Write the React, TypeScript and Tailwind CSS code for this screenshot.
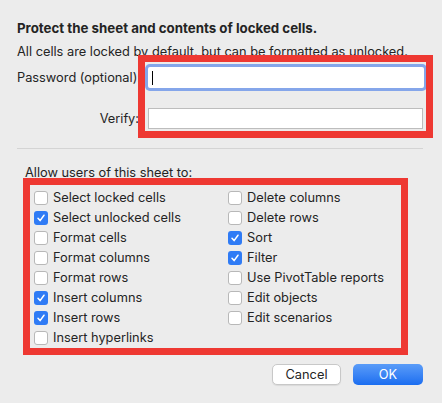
import React from "react";

const left: [string, boolean][] = [
  ["Select locked cells", false],
  ["Select unlocked cells", true],
  ["Format cells", false],
  ["Format columns", false],
  ["Format rows", false],
  ["Insert columns", true],
  ["Insert rows", true],
  ["Insert hyperlinks", false],
];
const right: [string, boolean][] = [
  ["Delete columns", false],
  ["Delete rows", false],
  ["Sort", true],
  ["Filter", true],
  ["Use PivotTable reports", false],
  ["Edit objects", false],
  ["Edit scenarios", false],
];

function Check({ label, checked }: { label: string; checked: boolean }) {
  return (
    <div className="flex h-[20px] items-center gap-[5px]">
      {checked ? (
        <div className="flex h-[14px] w-[14px] items-center justify-center rounded-[3px] bg-[#2f7bf5]">
          <svg width="10" height="10" viewBox="0 0 10 10">
            <path d="M2 5.2 L4.1 7.6 L8 2.2" fill="none" stroke="white" strokeWidth="1.5" strokeLinecap="round" strokeLinejoin="round" />
          </svg>
        </div>
      ) : (
        <div className="h-[14px] w-[14px] rounded-[3px] border border-[#b8b8b8] bg-white" />
      )}
      <span>{label}</span>
    </div>
  );
}

export default function App() {
  return (
    <div
      className="relative h-[403px] w-[442px] overflow-hidden bg-[#ececec] text-[12.8px] leading-[16px] text-[#242424]"
      style={{ fontFamily: 'Inter, "Liberation Sans", Arial, sans-serif' }}
    >
      <div className="flex flex-col pt-[20px]">
        <div className="pl-[17px] text-[13.3px] font-bold">Protect the sheet and contents of locked cells.</div>
        <div className="mt-[8px] pl-[17px]">All cells are locked by default, but can be formatted as unlocked.</div>
        <div className="mt-[7px] flex items-center pl-[17px]">
          <div className="w-[122px] whitespace-nowrap text-right">Password (optional):</div>
          <div className="ml-[9px] flex h-[21px] w-[276px] items-center rounded-[2px] bg-white pl-[4px] ring-[3px] ring-[#85a6ea]">
            <div className="h-[14px] w-px bg-black" />
          </div>
        </div>
        <div className="mt-[20px] flex items-center pl-[17px]">
          <div className="w-[122px] text-right">Verify:</div>
          <div className="ml-[9px] h-[21px] w-[275px] border border-[#bdbdbd] bg-white" />
        </div>
        <div className="ml-[17px] mt-[19px] w-[406px] border-t border-[#d4d4d4]" />
        <div className="mt-[16px] pl-[25px]">Allow users of this sheet to:</div>
        <div className="mt-[7px] grid grid-cols-[194px_1fr] pl-[34px]">
          <div className="flex flex-col">
            {left.map(([l, c]) => (
              <Check key={l} label={l} checked={c} />
            ))}
          </div>
          <div className="flex flex-col">
            {right.map(([l, c]) => (
              <Check key={l} label={l} checked={c} />
            ))}
          </div>
        </div>
        <div className="mt-[16px] flex justify-end gap-[12px] pr-[19px]">
          <div className="flex h-[21px] w-[69px] items-center justify-center rounded-[5px] border border-[#c8c8c8] bg-white shadow-[0_1px_1px_rgba(0,0,0,0.08)]">
            Cancel
          </div>
          <div className="flex h-[21px] w-[70px] items-center justify-center rounded-[5px] bg-gradient-to-b from-[#5a9cf8] to-[#1a6df0] text-white">
            OK
          </div>
        </div>
      </div>
      <div className="absolute left-[138px] top-[55px] h-[83px] w-[295px] border-[7px] border-[#ee3832]" />
      <div className="absolute left-[23px] top-[178px] h-[177px] w-[385px] border-[7px] border-[#ee3832]" />
    </div>
  );
}
